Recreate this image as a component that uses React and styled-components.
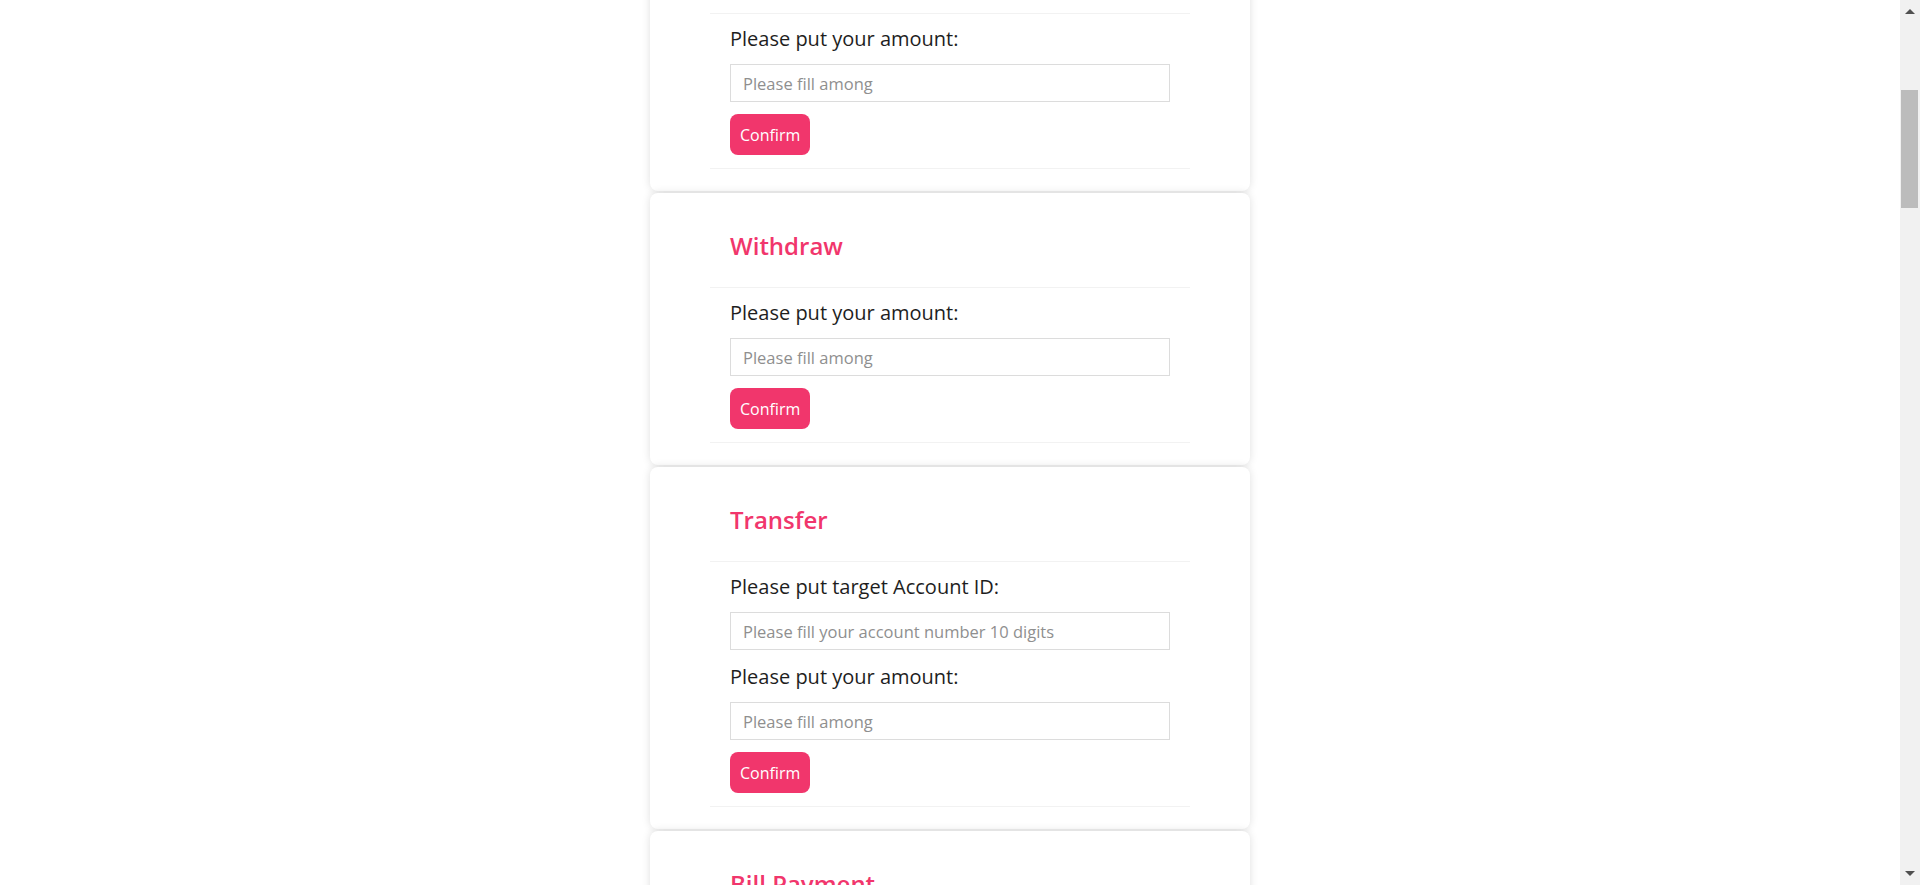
import React, { useLayoutEffect } from "react";
import styled, { createGlobalStyle } from "styled-components";

const GlobalStyle = createGlobalStyle`
  html, body {
    margin: 0;
    padding: 0;
    background: #fff;
  }
  body {
    font-family: "Open Sans", "Noto Sans", sans-serif;
    color: #212121;
  }
  * {
    box-sizing: border-box;
  }
`;

const sections = [
  {
    title: "Deposit",
    fields: [{ label: "Please put your amount:", placeholder: "Please fill among" }],
  },
  {
    title: "Withdraw",
    fields: [{ label: "Please put your amount:", placeholder: "Please fill among" }],
  },
  {
    title: "Transfer",
    fields: [
      { label: "Please put target Account ID:", placeholder: "Please fill your account number 10 digits" },
      { label: "Please put your amount:", placeholder: "Please fill among" },
    ],
  },
  {
    title: "Bill Payment",
    fields: [
      { label: "Please put your Bill ID:", placeholder: "Please fill your bill number" },
      { label: "Please put your amount:", placeholder: "Please fill among" },
    ],
  },
];

const App = () => {
  // the page is looked at a bit down from the top
  useLayoutEffect(() => {
    window.scrollTo(0, 455);
  }, []);

  return (
    <>
      <GlobalStyle />
      <Page>
        <CardList>
          {sections.map((section) => (
            <ActionCard key={section.title} title={section.title} fields={section.fields} />
          ))}
        </CardList>
      </Page>
      <ScrollBar aria-hidden="true">
        <ArrowUp />
        <Thumb />
        <ArrowDown />
      </ScrollBar>
    </>
  );
};

const ActionCard = ({ title, fields }) => {
  return (
    <Card>
      <Header>
        <Title>{title}</Title>
      </Header>
      <Body>
        {fields.map((field) => (
          <Field key={field.label}>
            <Label>{field.label}</Label>
            <Input type="text" placeholder={field.placeholder} />
          </Field>
        ))}
        <Button>Confirm</Button>
      </Body>
    </Card>
  );
};

const Page = styled.div`
  min-height: 6400px;
  padding-top: 374px;
  padding-right: 20px;
`;

const CardList = styled.div`
  width: 600px;
  margin: 0 auto;
  display: flex;
  flex-direction: column;
  gap: 2px;
`;

const Card = styled.div`
  background: #fff;
  border-radius: 8px;
  box-shadow: 0 0 8px rgba(0, 0, 0, 0.13);
  padding: 0 60px 22px;
`;

const Header = styled.div`
  padding: 38px 20px 27px;
`;

const Title = styled.h3`
  margin: 0;
  font-size: 24px;
  line-height: 29px;
  font-weight: 600;
  color: #f1366c;
`;

const Body = styled.div`
  border-top: 1px solid #f2f2f2;
  border-bottom: 1px solid #f2f2f2;
  padding: 10px 20px 13px;
`;

const Field = styled.div`
  margin-bottom: 12px;
`;

const Label = styled.label`
  display: block;
  font-size: 20px;
  line-height: 30px;
  color: #1e1e1e;
  margin-bottom: 10px;
`;

const Input = styled.input`
  display: block;
  width: 100%;
  height: 38px;
  border: 1px solid #dcdcdc;
  border-radius: 0;
  padding: 0 12px;
  font-family: "Open Sans", "Noto Sans", sans-serif;
  font-size: 16.5px;
  color: #333;
  outline: none;
  &::placeholder {
    color: #8f8f8f;
  }
`;

const Button = styled.button`
  height: 41px;
  padding: 0 10px;
  border: none;
  border-radius: 8px;
  background: #f1366c;
  color: #fff;
  font-family: "Open Sans", "Noto Sans", sans-serif;
  font-size: 16px;
  cursor: pointer;
`;

const ScrollBar = styled.div`
  position: fixed;
  top: 0;
  right: 0;
  bottom: 0;
  width: 20px;
  background: #f1f1f1;
`;

const ArrowUp = styled.div`
  position: absolute;
  top: 9px;
  left: 5px;
  width: 0;
  height: 0;
  border-left: 5px solid transparent;
  border-right: 5px solid transparent;
  border-bottom: 5px solid #505050;
`;

const ArrowDown = styled.div`
  position: absolute;
  bottom: 9px;
  left: 5px;
  width: 0;
  height: 0;
  border-left: 5px solid transparent;
  border-right: 5px solid transparent;
  border-top: 5px solid #505050;
`;

const Thumb = styled.div`
  position: absolute;
  top: 90px;
  left: 1px;
  width: 17px;
  height: 118px;
  background: #bcbcbc;
`;

export default App;
